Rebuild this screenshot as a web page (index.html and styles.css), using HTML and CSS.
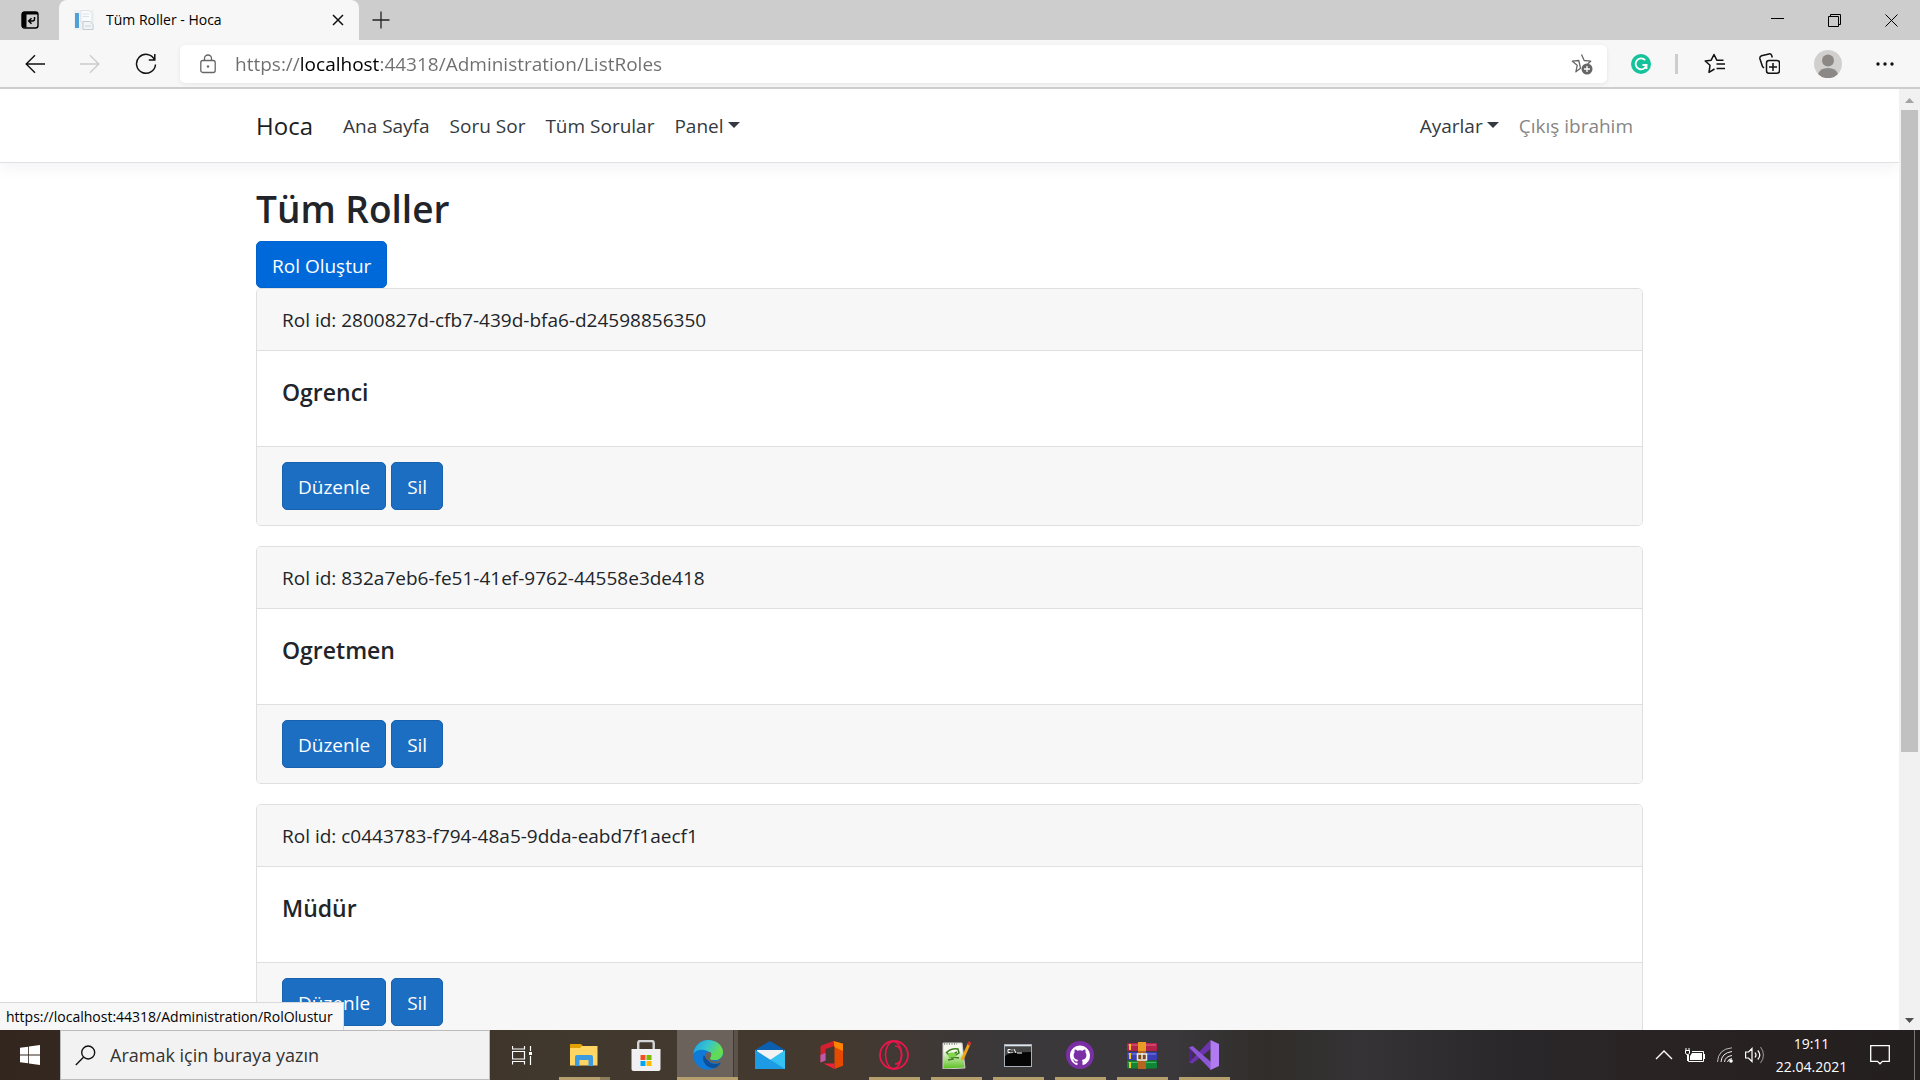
FILE: index.html
```html
<!DOCTYPE html>
<html lang="tr">
<head>
<meta charset="utf-8">
<title>Tüm Roller - Hoca</title>
<link rel="stylesheet" href="styles.css">
</head>
<body>
<header class="browser">
  <div class="titlebar">
    <button class="tab-actions" aria-label="Sekme eylemleri">
      <svg width="18" height="18" viewBox="0 0 18 18"><rect x="1" y="1" width="16" height="16" rx="2.5" fill="none" stroke="#000" stroke-width="1.4"/><path d="M1 1.500h4.500v15H1zM1 1h16v2.500H1z"/><path d="M13.500 6v2q0 2-2 2H8M10.500 7.200 7.700 10l2.800 2.800" fill="none" stroke="#000" stroke-width="1.500"/></svg>
    </button>
    <div class="tab">
      <svg width="20" height="20" viewBox="0 0 20 20"><rect width="20" height="20" fill="#eef0f2"/><rect x="1" y="3" width="4" height="15" fill="#4fa0d4"/><path d="M7 .5h8l3 3V12H7z" fill="#f9fafb" stroke="#dde3e8"/><path d="M9 4h6M9 6.500h6" stroke="#dde2e8"/><path d="M9 11.500h7l3 3v5H9z" fill="#f2f5f7" stroke="#c3cbd2"/><path d="M11 16h6" stroke="#c9d0d7"/></svg>
      <span class="tab-title">Tüm Roller - Hoca</span>
      <button class="tab-close" aria-label="Sekmeyi kapat"><svg width="12" height="12" viewBox="0 0 12 12"><path d="M1 1l10 10M11 1 1 11" stroke="#111" stroke-width="1.500"/></svg></button>
    </div>
    <button class="new-tab" aria-label="Yeni sekme"><svg width="18" height="18" viewBox="0 0 18 18"><path d="M9 .5v17M.5 9h17" stroke="#222" stroke-width="1.300"/></svg></button>
    <div class="window-controls">
      <button aria-label="Simge durumuna küçült"><svg width="13" height="13" viewBox="0 0 13 13"><path d="M0 4.500h13" stroke="#000"/></svg></button>
      <button aria-label="Önceki boyut"><svg width="13" height="13" viewBox="0 0 13 13"><path d="M.5 2.500h10v10H.5zM2.500 2.500V.5h10v10h-2" fill="none" stroke="#000"/></svg></button>
      <button aria-label="Kapat"><svg width="13" height="13" viewBox="0 0 13 13"><path d="M.5.5l12 12M12.500.5l-12 12" stroke="#000"/></svg></button>
    </div>
  </div>
  <div class="toolbar">
    <div class="nav-buttons">
      <button aria-label="Geri"><svg width="20" height="20" viewBox="0 0 20 20"><path d="M20 10H1.200M10 1.200 1.200 10l8.800 8.800" fill="none" stroke="#111" stroke-width="1.400"/></svg></button>
      <button aria-label="İleri" disabled><svg width="20" height="20" viewBox="0 0 20 20"><path d="M0 10h18.800M10 1.200l8.800 8.800-8.800 8.800" fill="none" stroke="#ccc" stroke-width="1.400"/></svg></button>
      <button aria-label="Yenile"><svg width="22" height="22" viewBox="0 0 22 22"><path d="M19.500 6.500A9.500 9.500 0 1 0 20.500 11.500M19.800 1v6h-6" fill="none" stroke="#111" stroke-width="1.500"/></svg></button>
    </div>
    <div class="address">
      <svg width="16" height="20" viewBox="0 0 16 20"><rect x=".8" y="6.500" width="14.400" height="12" rx="2" fill="none" stroke="#666" stroke-width="1.300"/><path d="M4.500 6.500V4.500a3.500 3.500 0 0 1 7 0v2" fill="none" stroke="#666" stroke-width="1.300"/><circle cx="8" cy="12.500" r="1.200" fill="#666"/></svg>
      <input class="url" type="text" aria-label="Adres çubuğu" value="https://localhost:44318/Administration/ListRoles">
      <svg width="22" height="22" viewBox="0 0 22 22"><path d="M10.500 1.500l2.700 6 6.500.7-3 2.800M9.500 15.200l-4.600 3.600 1.300-6.500L1.300 8.200l6.500-.7z" fill="none" stroke="#666" stroke-width="1.300" stroke-linejoin="round"/><circle cx="16" cy="16" r="5.500" fill="#666"/><path d="M16 13v6M13 16h6" stroke="#fff" stroke-width="1.300"/></svg>
    </div>
    <div class="extensions">
      <button aria-label="Grammarly"><svg width="20" height="20" viewBox="0 0 20 20"><circle cx="10" cy="10" r="10" fill="#15c39a"/><path d="M14.200 6.200a5.500 5.500 0 1 0 1.300 4.800h-4M15.500 11v4" fill="none" stroke="#fff" stroke-width="1.800"/></svg></button>
      <span class="separator"></span>
      <button aria-label="Sık kullanılanlar"><svg width="21" height="21" viewBox="0 0 21 21"><path d="M10.500 16 5 19.300l1-7L1.200 8l6-.8L10 1.500l2.800 5.700 6.700 0M12.500 11H21M12.500 15.500H21" fill="none" stroke="#111" stroke-width="1.500" stroke-linejoin="round"/></svg></button>
      <button aria-label="Koleksiyonlar"><svg width="21" height="21" viewBox="0 0 21 21"><rect x="7.500" y="7.500" width="13" height="12.700" rx="2.500" fill="none" stroke="#111" stroke-width="1.500"/><path d="M14 10v8M10 14h8M5 15 3.500 13.500.9 5.700Q.5 3.500 2.500 2.700L10 .9q2-.3 2.600 1.400l.7 2.200" fill="none" stroke="#111" stroke-width="1.500"/></svg></button>
      <button aria-label="Profil"><svg width="28" height="28" viewBox="0 0 28 28"><circle cx="14" cy="14" r="14" fill="#d2d0ce"/><circle cx="14" cy="10.500" r="6" fill="#8c8886"/><path d="M4 24q2-6 10-6t10 6a14 14 0 0 1-20 0z" fill="#8c8886"/></svg></button>
      <button aria-label="Ayarlar ve daha fazlası"><svg width="18" height="4" viewBox="0 0 18 4"><g fill="#111"><circle cx="2" cy="2" r="1.700"/><circle cx="9" cy="2" r="1.700"/><circle cx="16" cy="2" r="1.700"/></g></svg></button>
    </div>
  </div>
</header>

<div class="viewport">
  <div class="page">
    <nav class="navbar">
      <div class="container navbar-inner">
        <a class="brand" href="#">Hoca</a>
        <ul class="nav-links">
          <li><a href="#">Ana Sayfa</a></li>
          <li><a href="#">Soru Sor</a></li>
          <li><a href="#">Tüm Sorular</a></li>
          <li><a class="dropdown" href="#">Panel</a></li>
        </ul>
        <ul class="nav-links nav-user">
          <li><a class="dropdown" href="#">Ayarlar</a></li>
          <li><button class="logout">Çıkış ibrahim</button></li>
        </ul>
      </div>
    </nav>
    <main class="container content">
      <h1>Tüm Roller</h1>
      <a class="btn btn-hover" href="#">Rol Oluştur</a>
      <section class="card">
        <div class="card-header">Rol id: 2800827d-cfb7-439d-bfa6-d24598856350</div>
        <div class="card-body"><h5>Ogrenci</h5></div>
        <div class="card-footer"><a class="btn" href="#">Düzenle</a><button class="btn">Sil</button></div>
      </section>
      <section class="card">
        <div class="card-header">Rol id: 832a7eb6-fe51-41ef-9762-44558e3de418</div>
        <div class="card-body"><h5>Ogretmen</h5></div>
        <div class="card-footer"><a class="btn" href="#">Düzenle</a><button class="btn">Sil</button></div>
      </section>
      <section class="card">
        <div class="card-header">Rol id: c0443783-f794-48a5-9dda-eabd7f1aecf1</div>
        <div class="card-body"><h5>Müdür</h5></div>
        <div class="card-footer"><a class="btn" href="#">Düzenle</a><button class="btn">Sil</button></div>
      </section>
    </main>
  </div>
  <div class="scrollbar">
    <svg width="21" height="21" viewBox="0 0 21 21"><path d="M6 14l4.500-5L15 14z" fill="#a3a3a3"/></svg>
    <div class="track"><div class="thumb"></div></div>
    <svg width="21" height="21" viewBox="0 0 21 21"><path d="M6 9l4.500 5L15 9z" fill="#505050"/></svg>
  </div>
  <div class="status">https://localhost:44318/Administration/RolOlustur</div>
</div>

<footer class="taskbar">
  <button class="start" aria-label="Başlat"><svg width="20" height="20" viewBox="0 0 20 20"><path d="M0 2.800 8.200 1.700v7.800H0zM9 1.500 20 0v9.500H9zM0 10.400h8.200v7.800L0 17.200zM9 10.400h11V20L9 18.400z" fill="#fff"/></svg></button>
  <label class="search">
    <svg width="21" height="21" viewBox="0 0 21 21"><circle cx="13.200" cy="7.500" r="6.500" fill="none" stroke="#111" stroke-width="1.400"/><path d="M8.500 12.200.8 20" stroke="#111" stroke-width="1.400"/></svg>
    <input type="text" aria-label="Ara" placeholder="Aramak için buraya yazın">
  </label>
  <div class="apps">
    <button aria-label="Görev görünümü"><svg width="21" height="20" viewBox="0 0 21 20"><path d="M.5 1v3h12V1M.5 6.500h12v7.500H.5zM.5 19.500v-3h12v3M18.500 1v5M18.500 11v9" fill="none" stroke="#fff" stroke-width="1.200"/><path d="M17 7h3v3h-3z" fill="#fff"/></svg></button>
    <button class="open stacked" aria-label="Dosya Gezgini"><svg width="28" height="24" viewBox="0 0 28 24"><path d="M0 1h11l3 3h13v18H0z" fill="#e2a100"/><path d="M0 5h10l2-2h15.500v19.500H0z" fill="#ffd664"/><path d="M5 23v-9q0-2 2-2h14q2 0 2 2v9h-4.500v-6h-9v6z" fill="#3d9be2"/></svg></button>
    <button aria-label="Microsoft Store"><svg width="30" height="31" viewBox="0 0 30 31"><path d="M7.200 9V3q0-2 2-2h11.500q2 0 2 2v6" fill="none" stroke="#d4d4d6" stroke-width="2.400"/><path d="M.5 9h29v20q0 2-2 2h-25q-2 0-2-2z" fill="#f1f1f3"/><path d="M9.500 15h5v5h-5z" fill="#f25022"/><path d="M15.500 15h5v5h-5z" fill="#7fba00"/><path d="M9.500 21h5v5h-5z" fill="#00a4ef"/><path d="M15.500 21h5v5h-5z" fill="#ffb900"/></svg></button>
    <button class="open active" aria-label="Microsoft Edge"><svg width="30" height="30" viewBox="0 0 30 30"><defs><linearGradient id="edge-top" x1="0" y1="0" x2="1" y2=".4"><stop offset="0" stop-color="#1d9de0"/><stop offset=".5" stop-color="#35c4cf"/><stop offset="1" stop-color="#6be048"/></linearGradient></defs><circle cx="15" cy="15" r="14.800" fill="#0f7ad8"/><path d="M.3 14C1.500 5 8 0 15 0c8.500 0 15 5.500 15 12 0 5-4 8-8.500 8-3 0-4.500-1-4-2 1.500-1.500 1.500-5-2-6.500C10.500 9 3 9 .3 14z" fill="url(#edge-top)"/><path d="M10.500 15.500c-2 7 4 13.500 11.500 12.500 2.500-1 4.500-3 6-5.500-7 3-13 1-13.500-5z" fill="#0c509b"/><path d="M12 15.500q1-4 5-3.500 3.500 2 .5 7 2 3 7.500 2l5-5v5l-2 1.500q-7 2.500-12-1.500-4-2-4-5.500z" fill="#6a625b"/><path d="M30 12c0 5-4 8.500-9 8-3 0-4.500-1-4-2 1.500-1.500 1.500-3.500 1-4.500z" fill="#5fdb58"/></svg></button>
    <button aria-label="Posta"><svg width="30" height="28" viewBox="0 0 30 28"><path d="M0 9 15 0l15 9v4H0z" fill="#0a5fb0"/><path d="M2 9h26v10H2z" fill="#f3f3f3"/><path d="M0 9l15 10L30 9v19H0z" fill="#35c1f1"/><path d="M0 9l30 19H0z" fill="#1e9be5"/></svg></button>
    <button aria-label="Office"><svg width="24" height="28" viewBox="0 0 24 28"><path d="M13.500 0 1.500 4.500Q.5 5 .5 6.500v15l5-2V8l9-3z" fill="#d2202e"/><path d="M.5 14v7.500l5-2V12z" fill="#b85dae"/><path d="M13.500 0 23 2.800v22L14.500 28V0z" fill="#e64a00"/><path d="M13.500 0 23 2.800V10l-8.500-4z" fill="#ff8500"/><path d="M3.500 22.500h11V28z" fill="#f0223b"/></svg></button>
    <button class="open" aria-label="Opera"><svg width="30" height="30" viewBox="0 0 30 30"><g fill="none" stroke="#e9164b"><circle cx="15" cy="15" r="14" stroke-width="1.800"/><ellipse cx="14.500" cy="15" rx="8" ry="13.500" stroke-width="1.600"/><path d="M16 6c9 0 9 18 0 18" stroke-width="1.600"/></g></svg></button>
    <button class="open" aria-label="Notepad++"><svg width="30" height="28" viewBox="0 0 30 28"><defs><linearGradient id="note" x1="0" y1="0" x2="0" y2="1"><stop offset=".3" stop-color="#f6f8ee"/><stop offset="1" stop-color="#58c01c"/></linearGradient></defs><path d="M2 2h19l3 25-22 1z" fill="url(#note)" stroke="#ccc"/><path d="M3 3h13" stroke="#999" stroke-width="2" stroke-dasharray="1 1.500"/><path d="M5 12q5-5 12-4l1 4-6 4 6 1M6 12l6 6-5 1M8 16l8-5" fill="none" stroke="#3f7c1f" stroke-width="1.500"/><ellipse cx="11" cy="14" rx="4" ry="2.500" fill="#7ed648"/><path d="M28.500 2 21 19" stroke="#f0a31b" stroke-width="3"/><path d="M29 1l-1.500 3" stroke="#c33" stroke-width="3"/></svg></button>
    <button class="open" aria-label="Komut İstemi"><svg width="28" height="23" viewBox="0 0 28 23"><rect x=".5" y=".5" width="27" height="22" fill="#050505" stroke="#a7b0b8"/><path d="M1 1h26v1.500H1z" fill="#dfe6ec"/><path d="M1 12q5-4 26-4V3H1z" fill="#444"/><path d="M6.500 5.500H4v3h2.500M8 5.500v1M8 8v1M10 5l2 4M13 9h5" fill="none" stroke="#fff" stroke-width="1"/></svg></button>
    <button class="open" aria-label="GitHub Desktop"><svg width="28" height="28" viewBox="0 0 28 28"><circle cx="14" cy="14" r="14" fill="#7b2fa5"/><path transform="translate(4 4.500) scale(1.250)" d="M8 0C3.580 0 0 3.580 0 8c0 3.540 2.290 6.530 5.470 7.590.4.070.55-.17.55-.38 0-.19-.01-.82-.01-1.490-2.010.37-2.530-.49-2.690-.94-.09-.23-.48-.94-.82-1.130-.28-.15-.68-.52-.01-.53.63-.01 1.080.58 1.230.82.72 1.210 1.870.87 2.330.66.070-.52.28-.87.51-1.070-1.780-.2-3.640-.89-3.640-3.950 0-.87.31-1.590.82-2.150-.08-.2-.36-1.020.08-2.120 0 0 .67-.21 2.200.82a7.600 7.600 0 0 1 4 0c1.530-1.040 2.200-.82 2.200-.82.44 1.100.16 1.920.08 2.120.51.56.82 1.270.82 2.150 0 3.070-1.870 3.750-3.650 3.950.29.25.54.73.54 1.480 0 1.070-.01 1.930-.01 2.200 0 .21.15.46.55.38A8 8 0 0 0 16 8c0-4.420-3.580-8-8-8z" fill="#fff"/></svg></button>
    <button class="open" aria-label="WinRAR"><svg width="30" height="27" viewBox="0 0 30 27"><rect y="1" width="30" height="8" rx="1" fill="#b3234b"/><rect y="10" width="30" height="8" rx="1" fill="#3a3fb5"/><rect y="18.500" width="30" height="8" rx="1" fill="#128436"/><path d="M1 3h28" stroke="#e86a85"/><path d="M1 12h28" stroke="#7d84e6"/><path d="M1 20.500h28" stroke="#3fbd64"/><path d="M3 2v24" stroke="#f5c518" stroke-width="2" stroke-dasharray="6 3"/><path d="M11 0h8v27h-8z" fill="#b5651d"/><path d="M11 0h8v9h-8z" fill="#e89c26"/><rect x="10.500" y="12" width="9" height="6" fill="#7a4a18" stroke="#eee" stroke-width="1.500"/><path d="M15 11v6" stroke="#eee" stroke-width="1.500"/></svg></button>
    <button class="open" aria-label="Visual Studio"><svg width="30" height="30" viewBox="0 0 30 30"><path d="M0 7.500 3.500 6v17L0 22z" fill="#52218a"/><path d="M0 22.500 21.500 0v9L3.500 23.500z" fill="#6c33af"/><path d="M0 7.500 3.500 6 22 22v8z" fill="#8d57d6"/><path d="M21.500 0 30 4v22l-8.500 4z" fill="#b07af0"/></svg></button>
  </div>
  <div class="tray">
    <button aria-label="Gizli simgeler"><svg width="18" height="10" viewBox="0 0 18 10"><path d="M1 9l8-8 8 8" fill="none" stroke="#fff" stroke-width="1.400"/></svg></button>
    <svg width="20" height="14" viewBox="0 0 20 14"><path d="M3.500 7v6.500h15v-10H7" fill="none" stroke="#fff"/><path d="M7 5h10v7H5V8z" fill="#fff"/><path d="M19.500 6v5M1 0v3M4 0v3M2.500 6v7" stroke="#fff"/><path d="M.5 2.500h4V5L3.500 6.500h-2L.5 5z" fill="none" stroke="#fff"/></svg>
    <svg width="16" height="16" viewBox="0 0 16 16"><g fill="none" stroke="#eee"><path d="M.5 15Q1 2 15 .8" stroke="#bbb"/><path d="M4 15Q4.500 6 15 4.500M7.500 15Q8 9.500 15 8.500M10.500 15q.5-3 4.500-3.500"/></g><circle cx="14" cy="14" r="1.800" fill="#fff"/></svg>
    <svg width="20" height="18" viewBox="0 0 20 18"><path d="M.6 6h3L7 2.500v13L3.500 12H.6zM10 6.500q2 2.500 0 5M12.800 4.500q4 4.500 0 9" fill="none" stroke="#fff" stroke-width="1.200"/><path d="M15.500 1q6 8 0 16" fill="none" stroke="#888" stroke-width="1.200"/></svg>
    <div class="clock"><time>19:11</time><time>22.04.2021</time></div>
    <button aria-label="Bildirimler"><svg width="20" height="20" viewBox="0 0 20 20"><path d="M.7.7h18.600v15.600h-6.800L10 18.800l-2.500-2.500H.7z" fill="none" stroke="#fff" stroke-width="1.300"/></svg></button>
    <button class="show-desktop" aria-label="Masaüstünü göster"></button>
  </div>
</footer>
</body>
</html>
```
FILE: styles.css
```css
* { box-sizing: border-box; }

body {
  margin: 0;
  height: 100vh;
  display: flex;
  flex-direction: column;
  overflow: hidden;
  font-family: "Open Sans", "Noto Sans", sans-serif;
  font-size: 19px;
  line-height: 30px;
  color: #212529;
  background: #fff;
}

button {
  border: 0;
  padding: 0;
  background: none;
  font: inherit;
  color: inherit;
}

a { color: inherit; text-decoration: none; }
svg { display: block; flex: none; }
h1, h5, ul { margin: 0; padding: 0; }

/* Browser frame */
.browser { flex: none; border-bottom: 2px solid #cdcdcd; background: #f7f7f7; }

.titlebar {
  display: flex;
  align-items: center;
  height: 40px;
  background: #cdcdcd;
}

.tab-actions { width: 59px; padding-left: 21px; }

.tab {
  display: flex;
  align-items: center;
  align-self: stretch;
  gap: 12px;
  width: 300px;
  padding: 0 15px;
  border-radius: 8px 8px 0 0;
  background: #f7f7f7;
}

.tab-title { flex: 1; font-size: 14px; color: #000; }
.new-tab { margin-left: 13px; }

.window-controls { display: flex; gap: 44px; margin-left: auto; padding-right: 22px; }

.toolbar {
  display: flex;
  align-items: center;
  height: 47px;
  padding: 0 26px 0 25px;
}

.nav-buttons { display: flex; align-items: center; gap: 35px; width: 155px; }

.address {
  flex: 1;
  display: flex;
  align-items: center;
  gap: 19px;
  height: 38px;
  padding: 0 14px 0 20px;
  border-radius: 5px;
  background: #fff;
  box-shadow: 0 1px 4px rgba(0, 0, 0, .08);
}

/* The host part of the address is darker than the rest. */
.url {
  flex: 1;
  border: 0;
  padding: 0;
  height: 30px;
  outline: 0;
  font: inherit;
  color: #6e6e6e;
  background: linear-gradient(90deg, #6e6e6e 65px, #000 65px 145px, #6e6e6e 145px);
  background-clip: text;
  -webkit-background-clip: text;
  -webkit-text-fill-color: transparent;
}

.extensions {
  display: flex;
  align-items: center;
  gap: 34px;
  margin-left: 24px;
}

.separator { width: 3px; height: 20px; margin: 0 -8px 0 -10px; background: #cdcdcd; }

/* Page */
.viewport { position: relative; flex: 1; min-height: 0; display: flex; }
.page { flex: 1; min-width: 0; overflow: hidden; }

.container {
  max-width: 1425px;
  margin: 0 auto;
  padding: 0 19px;
}

.navbar {
  padding: 10px 0;
  border-bottom: 1px solid #dee2e6;
  box-shadow: 0 5px 15px rgba(0, 0, 0, .05);
}

.navbar-inner { display: flex; align-items: center; min-height: 53px; }
.brand { margin-right: 20px; font-size: 24px; color: #1b1e21; }
.nav-links { display: flex; list-style: none; color: #343a40; }
.nav-links a, .logout { display: block; padding: 0 10px; }
.nav-user { margin-left: auto; }
.logout { color: #868686; }

.dropdown::after {
  content: "";
  display: inline-block;
  margin-left: 4px;
  vertical-align: 5px;
  border: 6px solid transparent;
  border-top-color: #343a40;
  border-bottom: 0;
}

.content { padding-top: 22px; }

h1 {
  margin-bottom: 8px;
  font-size: 37px;
  font-weight: 600;
  line-height: 48px;
}

h5 { margin-bottom: 14px; padding-top: 1px; font-size: 23px; font-weight: 600; line-height: 30px; }

.btn {
  display: inline-block;
  height: 48px;
  padding: 9px 15px 7px;
  border: 1px solid #1861ac;
  border-radius: 5px;
  color: #fff;
  background: #1b6ec2;
}

.btn-hover { display: block; width: fit-content; height: 47px; border-color: #0062cc; background: #0069d9; }

.card {
  margin-bottom: 20px;
  border: 1px solid #dfdfdf;
  border-radius: 5px;
  overflow: hidden;
}

.card-header { padding: 16px 25px 15px; border-bottom: 1px solid #dfdfdf; background: #f7f7f7; }
.card-body { padding: 25px; }
.card-footer { display: flex; gap: 5px; padding: 15px 25px; border-top: 1px solid #dfdfdf; background: #f7f7f7; }

.scrollbar { display: flex; flex-direction: column; flex: none; width: 21px; background: #f1f1f1; }
.track { flex: 1; display: flex; flex-direction: column; padding: 0 2px; }
.track::after { content: ""; flex: 2; }
.thumb { flex: 5; background: #c1c1c1; }

.status {
  position: absolute;
  left: 0;
  bottom: 0;
  padding: 0 10px 0 6px;
  border: solid #dadada;
  border-width: 1px 1px 0 0;
  font-size: 14px;
  line-height: 27px;
  color: #000;
  background: #f7f7f7;
}

/* Taskbar */
.taskbar {
  flex: none;
  display: flex;
  height: 50px;
  background: linear-gradient(90deg, #32261f, #41382e 30%, #44392f 43%, #3b383a 52%, #3a383b 61%, #302d2a 66%, #353335 71%, #2a272a 79%, #292323 86%, #231f1e);
}

.start { width: 60px; padding-left: 20px; }

.search {
  display: flex;
  align-items: center;
  gap: 14px;
  width: 430px;
  padding: 0 14px;
  border: 1px solid #bbb;
  background: #f2f2f2;
}

.search input { flex: 1; min-width: 0; border: 0; padding: 0; outline: 0; font: inherit; font-size: 18px; background: none; }
.search input::placeholder { color: #333; opacity: 1; }

.apps { display: flex; padding-left: 1px; }

.apps button {
  display: flex;
  align-items: center;
  justify-content: center;
  width: 62px;
  border: solid transparent;
  border-width: 3px 0;
}

.open {
  background: linear-gradient(#b59f6c, #b59f6c) center bottom / 51px 3px no-repeat border-box;
}

.apps .stacked { background: linear-gradient(90deg, #b59f6c 41px, #8b7d5b 41px) center bottom / 51px 3px no-repeat border-box; }

.apps .active {
  background:
    linear-gradient(#b59f6c, #b59f6c) left bottom / 61px 3px no-repeat border-box,
    linear-gradient(90deg, #6a625b 56px, #3f3a35 56px 57px, #5a534c 57px 61px, transparent 61px) border-box;
}

.tray { display: flex; align-items: center; gap: 12px; margin-left: auto; color: #fff; }

.clock {
  display: flex;
  flex-direction: column;
  align-items: center;
  width: 69px;
  font-size: 14px;
  line-height: 23px;
}

.tray .clock + button { margin-left: 12px; }
.show-desktop { align-self: stretch; width: 6px; margin-left: 12px; border-left: 1px solid #777; }
```
